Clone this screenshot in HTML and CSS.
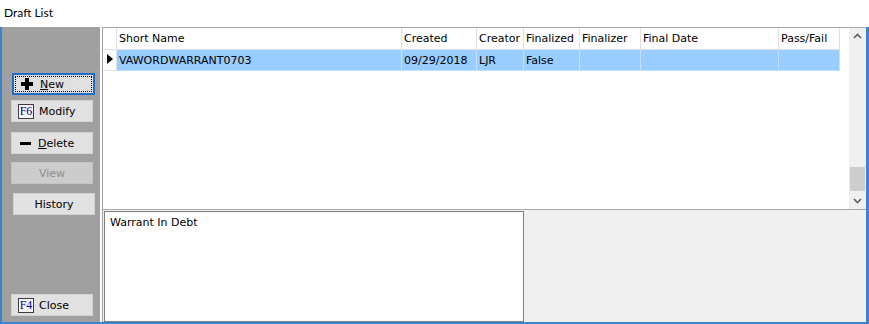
FILE: index.html
```html
<!DOCTYPE html>
<html lang="en">
<head>
    <meta charset="UTF-8">
    <title>Draft List</title>
    <link rel="stylesheet" href="styles.css">
</head>
<body>
    <div class="window">
        <div class="titlebar">Draft List</div>
        <div class="client">
            <aside class="toolbar">
                <button class="btn btn-new"><span class="ico-plus"></span><span><u>N</u>ew</span></button>
                <button class="btn btn-modify"><span class="key">F6</span><span>Modify</span></button>
                <button class="btn btn-delete"><span class="ico-minus"></span><span><u>D</u>elete</span></button>
                <button class="btn btn-view" disabled>View</button>
                <button class="btn btn-history">History</button>
                <button class="btn btn-close"><span class="key">F4</span><span>Close</span></button>
            </aside>
            <div class="content">
                <div class="grid-area">
                    <div class="grid">
                        <div class="row head">
                            <div class="cell rowhdr"></div>
                            <div class="cell">Short Name</div>
                            <div class="cell">Created</div>
                            <div class="cell">Creator</div>
                            <div class="cell">Finalized</div>
                            <div class="cell">Finalizer</div>
                            <div class="cell">Final Date</div>
                            <div class="cell">Pass/Fail</div>
                        </div>
                        <div class="row selected">
                            <div class="cell rowhdr"><span class="pointer"></span></div>
                            <div class="cell">VAWORDWARRANT0703</div>
                            <div class="cell">09/29/2018</div>
                            <div class="cell">LJR</div>
                            <div class="cell">False</div>
                            <div class="cell"></div>
                            <div class="cell"></div>
                            <div class="cell"></div>
                        </div>
                    </div>
                    <div class="vscroll">
                        <svg class="arrow" width="17" height="17" viewBox="0 0 17 17">
                            <polyline points="5,10 8.5,6.5 12,10" fill="none" stroke="#606060" stroke-width="1.6"/>
                        </svg>
                        <div class="track"><div class="thumb"></div></div>
                        <svg class="arrow" width="17" height="17" viewBox="0 0 17 17">
                            <polyline points="5,7 8.5,10.5 12,7" fill="none" stroke="#606060" stroke-width="1.6"/>
                        </svg>
                    </div>
                </div>
                <div class="detail">
                    <div class="memo">Warrant In Debt</div>
                </div>
            </div>
        </div>
    </div>
</body>
</html>
```

FILE: styles.css
```css
:root {
    --frame-color: #3a84d2;
    --panel-color: #a0a0a0;
    --face-color: #e1e1e1;
    --form-color: #f0f0f0;
    --line-color: #e0e0e0;
    --select-color: #99ccff;
    --text-color: #000;
}

* {
    box-sizing: border-box;
}

body {
    margin: 0;
    width: 869px;
    height: 324px;
    overflow: hidden;
    font-family: "DejaVu Sans", sans-serif;
    font-size: 11px;
    color: var(--text-color);
    background-color: #fff;
}

.window {
    display: flex;
    flex-direction: column;
    height: 324px;
}

.titlebar {
    height: 27px;
    padding: 5px 0 0 4px;
    font-family: "Lato", "Noto Sans", sans-serif;
    font-size: 12px;
    background-color: #fff;
}

.client {
    flex: 1;
    display: flex;
    border-left: 2px solid var(--frame-color);
    border-right: 3px solid var(--frame-color);
    border-bottom: 2px solid var(--frame-color);
}

/* left button panel */
.toolbar {
    width: 100px;
    display: flex;
    flex-direction: column;
    background-color: var(--panel-color);
    border-right: 2px solid #fafafa;
    padding-bottom: 6px;
}

.btn {
    display: flex;
    align-items: center;
    width: 82px;
    height: 22px;
    margin: 0 0 0 9px;
    padding: 0 0 0 6px;
    gap: 5px;
    font-family: "DejaVu Sans", sans-serif;
    font-size: 11px;
    color: var(--text-color);
    background-color: var(--face-color);
    border: 1px solid #d2d2d2;
    border-radius: 0;
}

.btn-new {
    width: 83px;
    margin: 46px 0 0 10px;
    padding-left: 7px;
    gap: 7px;
    border: 2px solid #1c6fc4;
    outline: 1px dotted #000;
    outline-offset: -4px;
}

.btn-modify {
    margin-top: 5px;
}

.btn-delete {
    margin-top: 10px;
    padding-left: 8px;
    gap: 7px;
}

.btn-view {
    margin-top: 8px;
    justify-content: center;
    padding: 0;
    color: #8c8c8c;
    background-color: #cccccc;
    border-color: #c4c4c4;
}

.btn-history {
    margin: 9px 0 0 11px;
    justify-content: center;
    padding: 0;
}

.btn-close {
    margin-top: auto;
}

.ico-plus {
    position: relative;
    width: 12px;
    height: 12px;
}

.ico-plus::before,
.ico-plus::after {
    content: "";
    position: absolute;
    background-color: #000;
}

.ico-plus::before {
    left: 0;
    top: 4px;
    width: 12px;
    height: 4px;
}

.ico-plus::after {
    left: 4px;
    top: 0;
    width: 4px;
    height: 12px;
}

.ico-minus {
    width: 11px;
    height: 3px;
    background-color: #000;
}

.key {
    display: inline-block;
    width: 16px;
    height: 15px;
    line-height: 13px;
    text-align: center;
    font-family: "Liberation Serif", serif;
    font-size: 12px;
    color: #000080;
    background-color: #f6f6fc;
    border: 1px solid #3c3c3c;
}

/* grid + detail on the right */
.content {
    flex: 1;
    display: flex;
    flex-direction: column;
    border-left: 1px solid var(--panel-color);
    background-color: var(--form-color);
}

.grid-area {
    height: 183px;
    display: flex;
    background-color: #fff;
    border-top: 1px solid #a8a8a8;
    border-bottom: 1px solid #a8a8a8;
}

.grid {
    flex: 1;
}

.row {
    display: grid;
    grid-template-columns: 14px 285px 75px 47px 56px 61px 138px 61px;
}

.head {
    height: 22px;
}

.cell {
    padding: 1px 0 0 2px;
    white-space: nowrap;
    overflow: hidden;
    border-right: 1px solid var(--line-color);
    border-bottom: 1px solid var(--line-color);
    line-height: 20px;
}

.selected {
    height: 21px;
}

.selected .cell {
    background-color: var(--select-color);
    border-color: #c2e0ff;
}

.selected .cell.rowhdr {
    background-color: #fff;
    border-color: var(--line-color);
    padding: 4px 0 0 4px;
}

.pointer {
    display: block;
    width: 0;
    height: 0;
    border-left: 6px solid #000;
    border-top: 5px solid transparent;
    border-bottom: 5px solid transparent;
}

.vscroll {
    width: 17px;
    display: flex;
    flex-direction: column;
    background-color: var(--form-color);
}

.arrow {
    display: block;
    flex: none;
}

.track {
    flex: 1;
    padding: 122px 1px 0 1px;
}

.thumb {
    height: 24px;
    background-color: #cdcdcd;
}

.detail {
    flex: 1;
    padding: 1px 0 0 1px;
}

.memo {
    width: 420px;
    height: 111px;
    padding: 4px 0 0 5px;
    line-height: 13px;
    background-color: #fff;
    border: 1px solid #808080;
}
```
